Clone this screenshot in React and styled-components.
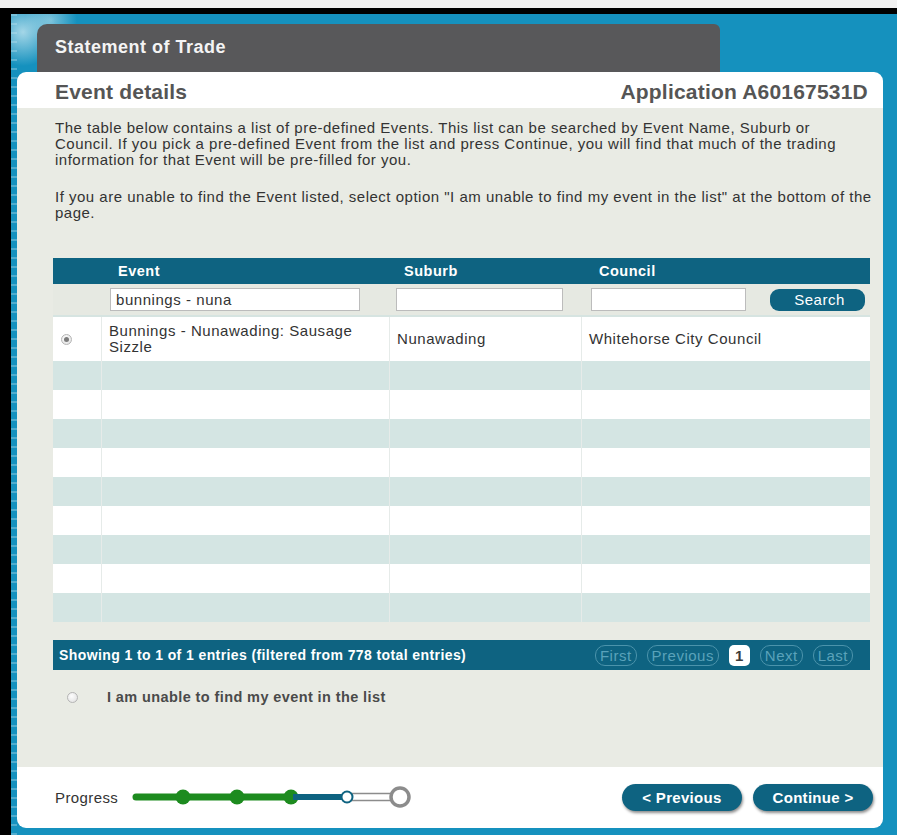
import React from "react";
import styled, { createGlobalStyle } from "styled-components";

const GlobalStyle = createGlobalStyle`
  html, body { margin: 0; padding: 0; background: #f1f1f1; }
  body { font-family: "Liberation Sans", Arial, sans-serif; }
  * { box-sizing: border-box; }
`;

const TEAL = "#0e6381";

const Screen = styled.div`
  width: 897px;
  height: 835px;
  padding-top: 8px;
  overflow: hidden;
  background: #f1f1f1;
`;

const Frame = styled.div`
  height: 827px;
  border-top: 6px solid #000;
  border-left: 11px solid #000;
  background-color: #1591be;
  background-image:
    radial-gradient(circle at 12px 18px, rgba(200, 232, 242, 0.8) 0, rgba(200, 232, 242, 0) 34px),
    radial-gradient(circle at 40px 6px, rgba(200, 232, 242, 0.55) 0, rgba(200, 232, 242, 0) 26px),
    repeating-linear-gradient(180deg, rgba(190, 225, 238, 0.35) 0 2px, rgba(190, 225, 238, 0) 2px 9px);
  background-size: 100% 100%, 100% 100%, 6px 100%;
  background-repeat: no-repeat;
  padding: 10px 14px 0 6px;
  display: flex;
  flex-direction: column;
`;

const Tab = styled.div`
  margin-left: 20px;
  width: 683px;
  height: 48px;
  background: #58585a;
  border-radius: 10px 6px 0 0;
  display: flex;
  align-items: center;
  padding: 0 0 2px 18px;
  color: #f4f4f4;
  font-size: 18px;
  font-weight: bold;
  letter-spacing: 0.5px;
`;

const Card = styled.div`
  height: 756px;
  background: #fff;
  border-radius: 9px;
  overflow: hidden;
  display: flex;
  flex-direction: column;
`;

const CardHeader = styled.div`
  height: 36px;
  flex: none;
  display: flex;
  align-items: center;
  justify-content: space-between;
  padding: 3px 15px 0 38px;
`;

const Heading = styled.h2`
  margin: 0;
  font-size: 21px;
  font-weight: bold;
  letter-spacing: 0.2px;
  color: #555;
`;

const Body = styled.div`
  flex: 1;
  background: #e9ebe4;
  padding: 12px 13px 0 36px;
`;

const Intro = styled.p`
  margin: 0 0 ${(p) => p.$after}px 2px;
  font-size: 15px;
  letter-spacing: 0.5px;
  line-height: 16px;
  white-space: nowrap;
  color: #333;
`;

const Table = styled.div`
  width: 817px;
`;

const FilterGrid = styled.div`
  display: grid;
  grid-template-columns: 57px 286px 195px 279px;
  align-items: center;
`;

const HeadRow = styled(FilterGrid)`
  height: 26px;
  background: ${TEAL};
`;

const HeadLabel = styled.div`
  padding-left: 8px;
  color: #fff;
  font-size: 14.5px;
  font-weight: bold;
  letter-spacing: 0.5px;
`;

const SearchRow = styled(FilterGrid)`
  height: 33px;
  background: #e6e9e2;
  border-bottom: 2px solid #d6e4e1;
`;

const SearchInput = styled.input`
  width: ${(p) => p.$w}px;
  height: 23px;
  border: 1px solid #bcbcbc;
  background: #fff;
  padding: 0 5px;
  font-family: "Liberation Sans", Arial, sans-serif;
  font-size: 15px;
  letter-spacing: 0.55px;
  color: #333;
  outline: none;
`;

const CouncilCell = styled.div`
  display: flex;
  align-items: center;
  justify-content: space-between;
  padding-right: 5px;
`;

const SearchButton = styled.button`
  width: 95px;
  height: 22px;
  border: none;
  border-radius: 9px;
  background: ${TEAL};
  color: #fff;
  font-family: "Liberation Sans", Arial, sans-serif;
  font-size: 15px;
  letter-spacing: 0.55px;
  text-align: right;
  padding: 0 20px 0 0;
`;

const DataRow = styled.div`
  display: grid;
  grid-template-columns: 48px 288px 192px 289px;
  height: ${(p) => (p.$tall ? 44 : 29)}px;
  background: ${(p) => (p.$odd ? "#d4e5e3" : "#fff")};
`;

const Cell = styled.div`
  display: flex;
  align-items: center;
  padding: 0 8px 0 7px;
  border-left: 1px solid #e6ebe9;
  font-size: 15px;
  letter-spacing: 0.55px;
  line-height: 16px;
  color: #333;

  &:first-child {
    border-left: none;
    padding-left: 8px;
  }
`;

const Radio = styled.span`
  display: inline-flex;
  align-items: center;
  justify-content: center;
  width: 11px;
  height: 11px;
  border-radius: 50%;
  border: 1px solid #b5b5b5;
  background: radial-gradient(circle at 40% 35%, #fdfdfd, #dedede);
  flex: none;

  &::after {
    content: "";
    width: 5px;
    height: 5px;
    border-radius: 50%;
    background: ${(p) => (p.$checked ? "#7b7b7b" : "transparent")};
  }
`;

const InfoBar = styled.div`
  margin-top: 18px;
  height: 30px;
  background: ${TEAL};
  display: flex;
  align-items: center;
  justify-content: space-between;
  padding: 0 17px 0 6px;
`;

const InfoText = styled.div`
  color: #fff;
  font-size: 14px;
  font-weight: bold;
  letter-spacing: 0.4px;
`;

const Pager = styled.div`
  display: flex;
  align-items: center;
  gap: 10px;
`;

const PageButton = styled.span`
  height: 21px;
  display: inline-flex;
  align-items: center;
  padding: 0 ${(p) => (p.$current ? 6 : 4)}px;
  border-radius: ${(p) => (p.$current ? 5 : 10)}px;
  border: ${(p) => (p.$current ? "none" : "1.5px solid #4b93ab")};
  background: ${(p) => (p.$current ? "#fff" : "transparent")};
  color: ${(p) => (p.$current ? "#3b3b3b" : "#5aa2ba")};
  font-size: 15px;
  font-weight: ${(p) => (p.$current ? "bold" : "normal")};
  letter-spacing: 0.5px;
`;

const UnableRow = styled.label`
  margin-top: 15px;
  height: 24px;
  display: flex;
  align-items: center;
  gap: 29px;
  padding-left: 14px;
  font-size: 14.5px;
  font-weight: bold;
  letter-spacing: 0.4px;
  color: #4a4a4a;
`;

const Footer = styled.div`
  height: 61px;
  flex: none;
  display: flex;
  align-items: center;
  padding: 0 10px 1px 38px;
`;

const ProgressLabel = styled.span`
  font-size: 15px;
  letter-spacing: 0.4px;
  color: #333;
`;

const ProgressTrack = styled.svg`
  margin-left: 12px;
  display: block;
`;

const NavGroup = styled.div`
  margin-left: auto;
  display: flex;
  gap: 11px;
`;

const NavButton = styled.button`
  width: 120px;
  height: 27px;
  border: none;
  border-radius: 14px;
  background: ${TEAL};
  box-shadow: 1px 2px 3px rgba(0, 0, 0, 0.45);
  color: #fff;
  font-family: "Liberation Sans", Arial, sans-serif;
  font-size: 15px;
  font-weight: bold;
  letter-spacing: 0.3px;
`;

function Progress() {
  return (
    <ProgressTrack width="285" height="30" viewBox="0 0 285 30">
      <line x1="6" y1="15" x2="163" y2="15" stroke="#1d8b1f" strokeWidth="7" strokeLinecap="round" />
      {[53, 107, 161].map((cx) => (
        <circle key={cx} cx={cx} cy="15" r="7.5" fill="#1d8b1f" />
      ))}
      <line x1="163" y1="15" x2="213" y2="15" stroke={TEAL} strokeWidth="6" />
      <rect x="222" y="11.5" width="42" height="7" fill="#fff" stroke="#8c8c8c" strokeWidth="1.5" />
      <circle cx="217" cy="15" r="5.5" fill="#fff" stroke={TEAL} strokeWidth="2" />
      <circle cx="270" cy="15" r="9" fill="#fff" stroke="#8c8c8c" strokeWidth="3.5" />
    </ProgressTrack>
  );
}

const rows = Array.from({ length: 9 }, (_, i) => i);

export default function App() {
  return (
    <>
      <GlobalStyle />
      <Screen>
        <Frame>
          <Tab>Statement of Trade</Tab>
          <Card>
            <CardHeader>
              <Heading>Event details</Heading>
              <Heading>Application A60167531D</Heading>
            </CardHeader>
            <Body>
              <Intro $after={21}>
                The table below contains a list of pre-defined Events. This list can be searched by Event Name, Suburb or
                <br />
                Council. If you pick a pre-defined Event from the list and press Continue, you will find that much of the trading
                <br />
                information for that Event will be pre-filled for you.
              </Intro>
              <Intro $after={37}>
                If you are unable to find the Event listed, select option "I am unable to find my event in the list" at the bottom of the
                <br />
                page.
              </Intro>

              <Table>
                <HeadRow>
                  <span />
                  <HeadLabel>Event</HeadLabel>
                  <HeadLabel>Suburb</HeadLabel>
                  <HeadLabel>Council</HeadLabel>
                </HeadRow>
                <SearchRow>
                  <span />
                  <SearchInput $w={250} defaultValue="bunnings - nuna" />
                  <SearchInput $w={167} />
                  <CouncilCell>
                    <SearchInput $w={155} />
                    <SearchButton>Search</SearchButton>
                  </CouncilCell>
                </SearchRow>
                <DataRow $tall>
                  <Cell>
                    <Radio $checked />
                  </Cell>
                  <Cell>Bunnings - Nunawading: Sausage Sizzle</Cell>
                  <Cell>Nunawading</Cell>
                  <Cell>Whitehorse City Council</Cell>
                </DataRow>
                {rows.map((i) => (
                  <DataRow key={i} $odd={i % 2 === 0}>
                    <Cell />
                    <Cell />
                    <Cell />
                    <Cell />
                  </DataRow>
                ))}
              </Table>

              <InfoBar>
                <InfoText>Showing 1 to 1 of 1 entries (filtered from 778 total entries)</InfoText>
                <Pager>
                  <PageButton>First</PageButton>
                  <PageButton>Previous</PageButton>
                  <PageButton $current>1</PageButton>
                  <PageButton>Next</PageButton>
                  <PageButton>Last</PageButton>
                </Pager>
              </InfoBar>

              <UnableRow>
                <Radio />
                I am unable to find my event in the list
              </UnableRow>
            </Body>
            <Footer>
              <ProgressLabel>Progress</ProgressLabel>
              <Progress />
              <NavGroup>
                <NavButton>&lt; Previous</NavButton>
                <NavButton>Continue &gt;</NavButton>
              </NavGroup>
            </Footer>
          </Card>
        </Frame>
      </Screen>
    </>
  );
}
